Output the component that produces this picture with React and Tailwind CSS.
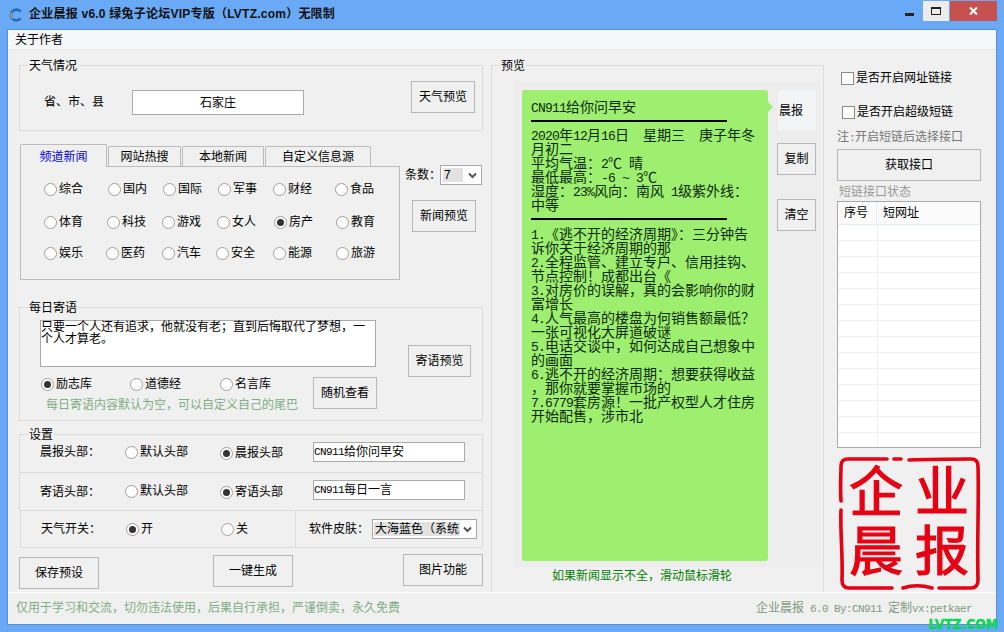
import React from 'react';

// ascii runs get a tightened mono font so they sit at half the width of a CJK glyph
const Mixed = ({ text, ascii }) => (
    <>
        {text.split(/([\x20-\x7e]+)/).map((part, i) =>
            /^[\x20-\x7e]+$/.test(part) ? (
                <span key={i} className={`font-['Liberation_Mono',monospace] ${ascii}`}>{part}</span>
            ) : (
                <span key={i}>{part}</span>
            )
        )}
    </>
);

const Btn = ({ children, className = '' }) => (
    <div className={`flex items-center justify-center shrink-0 border border-[#b8b8b8] bg-[#f0f0f0] ${className}`}>
        {children}
    </div>
);

const Radio = ({ label, checked, className = '' }) => (
    <div className={`flex items-center h-[16px] ${className}`}>
        <span className="flex items-center justify-center w-[13px] h-[13px] shrink-0 rounded-full border border-[#a0a0a0] bg-white">
            {checked && <span className="w-[7px] h-[7px] rounded-full bg-[#333]" />}
        </span>
        <span className="ml-[2px] whitespace-nowrap">{label}</span>
    </div>
);

const Check = ({ label, className = '' }) => (
    <div className={`flex items-center h-[16px] ${className}`}>
        <span className="w-[13px] h-[13px] shrink-0 border border-[#8a8a8a] bg-white" />
        <span className="ml-[2px] whitespace-nowrap">{label}</span>
    </div>
);

const Chevron = () => (
    <svg width="9" height="7" viewBox="0 0 9 7" className="shrink-0">
        <path d="M1 1.5 L4.5 5 L8 1.5" fill="none" stroke="#555" strokeWidth="2" />
    </svg>
);

const Group = ({ title, className = '', children }) => (
    <fieldset className={`border border-[#dcdcdc] ${className}`}>
        <legend className="ml-[8px] px-px h-[16px] leading-[18px]">{title}</legend>
        {children}
    </fieldset>
);

const newsRows = [
    { cols: 'grid-cols-[64px_55px_55px_55px_62px_1fr] mt-[14px]', items: ['综合', '国内', '国际', '军事', '财经', '食品'] },
    { cols: 'grid-cols-[63px_55px_55px_57px_62px_1fr] mt-[17px]', items: ['体育', '科技', '游戏', '女人', '房产', '教育'] },
    { cols: 'grid-cols-[62px_56px_54px_57px_63px_1fr] mt-[15px]', items: ['娱乐', '医药', '汽车', '安全', '能源', '旅游'] },
];

const weatherLines = [
    '2020年12月16日  星期三  庚子年冬',
    '月初二',
    '平均气温：2℃ 晴',
    '最低最高：-6 ~ 3℃',
    '湿度：23%风向：南风 1级紫外线：',
    '中等',
];

const newsLines = [
    '1.《逃不开的经济周期》：三分钟告',
    '诉你关于经济周期的那',
    '2.全程监管、建立专户、信用挂钩、',
    '节点控制！成都出台《',
    '3.对房价的误解，真的会影响你的财',
    '富增长',
    '4.人气最高的楼盘为何销售额最低？',
    '一张可视化大屏道破谜',
    '5.电话交谈中，如何达成自己想象中',
    '的画面',
    '6.逃不开的经济周期：想要获得收益',
    '，那你就要掌握市场的',
    '7.6779套房源！一批产权型人才住房',
    '开始配售，涉市北',
];

const PreviewLine = ({ text }) => (
    <div className="h-[14px] leading-[14px] whitespace-pre">
        <Mixed text={text} ascii="text-[13px] tracking-[-0.8px]" />
    </div>
);

const TitleBar = () => (
    <div className="flex items-start h-[29px] shrink-0 pr-[7px]">
        <svg width="14" height="14" viewBox="0 0 14 14" className="ml-[9px] mt-[8px] shrink-0">
            <path d="M11.6 3.6 A5.4 5.4 0 1 0 11.6 10.4" fill="none" stroke="#2270b8" strokeWidth="2.6" />
            <path d="M3 4.5 A4.2 4.2 0 0 0 4 10.5" fill="none" stroke="#d9a660" strokeWidth="1.2" />
        </svg>
        <div className="ml-[6px] mt-[6px] font-bold leading-[16px] tracking-[0.23px] whitespace-nowrap text-[#111]">
            企业晨报 v6.0 绿兔子论坛VIP专版（LVTZ.com）无限制
        </div>
        <div className="flex-1" />
        <div className="flex items-center justify-center w-[26px] h-[20px] mt-px">
            <span className="w-[9px] h-[3px] mt-[7px] bg-[#222]" />
        </div>
        <div className="flex items-center justify-center w-[26px] h-[20px] mt-px ml-px bg-[#ececec]">
            <span className="w-[10px] h-[8px] border border-t-2 border-[#222]" />
        </div>
        <div className="flex items-center justify-center w-[47px] h-[20px] mt-px ml-px bg-[#c75050]">
            <svg width="9" height="8" viewBox="0 0 9 8">
                <path d="M1 0.5 L8 7.5 M8 0.5 L1 7.5" stroke="#fff" strokeWidth="2" />
            </svg>
        </div>
    </div>
);

const LeftColumn = () => (
    <div className="w-[464px] pt-[7px] shrink-0">
        <Group title="天气情况" className="h-[74px]">
            <div className="flex items-start pl-[24px]">
                <div className="w-[60px] mt-[21px] whitespace-nowrap">省、市、县</div>
                <div className="flex items-center justify-center w-[172px] h-[25px] ml-[28px] mt-[17px] border border-[#aaa] bg-white">石家庄</div>
                <Btn className="w-[64px] h-[32px] ml-[107px] mt-[8px]">天气预览</Btn>
            </div>
        </Group>

        <div className="flex items-start mt-[13px] ml-px">
            <div className="w-[380px] shrink-0">
                <div className="flex items-end h-[22px] gap-px">
                    <div className="relative z-10 flex items-center justify-center w-[87px] h-[23px] -mb-px pt-px rounded-t-[2px] border border-b-0 border-[#bbb] bg-[#f0f0f0] text-[#0000e0]">频道新闻</div>
                    <div className="flex items-center justify-center w-[73px] h-[20px] pt-px rounded-t-[2px] border border-b-0 border-[#bbb]">网站热搜</div>
                    <div className="flex items-center justify-center w-[82px] h-[20px] pt-px rounded-t-[2px] border border-b-0 border-[#bbb]">本地新闻</div>
                    <div className="flex items-center justify-center w-[106px] h-[20px] pt-px rounded-t-[2px] border border-b-0 border-[#bbb]">自定义信息源</div>
                </div>
                <div className="h-[114px] pl-[23px] border border-[#bbb] flow-root">
                    {newsRows.map((row) => (
                        <div key={row.items[0]} className={`grid ${row.cols}`}>
                            {row.items.map((item) => (
                                <Radio key={item} label={item} checked={item === '房产'} />
                            ))}
                        </div>
                    ))}
                </div>
            </div>
            <div className="pt-[21px] ml-[5px]">
                <div className="flex items-center">
                    <span className="w-[35px] whitespace-nowrap">条数：</span>
                    <div className="flex items-center justify-between w-[42px] h-[20px] border border-[#a8a8a8] bg-white pl-[2px] pr-[4px]">
                        <span className="w-[20px] h-[14px] leading-[14px] bg-[#e2e2e2] pl-px">7</span>
                        <Chevron />
                    </div>
                </div>
                <Btn className="w-[64px] h-[32px] mt-[15px] ml-[7px]">新闻预览</Btn>
            </div>
        </div>

        <Group title="每日寄语" className="h-[122px] mt-[19px]">
            <div className="flex items-start pl-[20px]">
                <div className="w-[336px] shrink-0">
                    <div className="w-[336px] h-[47px] mt-[5px] border border-[#aaa] bg-white leading-[12px] whitespace-nowrap">
                        <div>只要一个人还有追求，他就没有老；直到后悔取代了梦想，一</div>
                        <div>个人才算老。</div>
                    </div>
                    <div className="flex items-start">
                        <div className="w-[273px] shrink-0">
                            <div className="grid grid-cols-[89px_90px_1fr] ml-px mt-[9px]">
                                <Radio label="励志库" checked />
                                <Radio label="道德经" />
                                <Radio label="名言库" />
                            </div>
                            <div className="ml-[6px] mt-[5px] text-[#7fae85] whitespace-nowrap">每日寄语内容默认为空，可以自定义自己的尾巴</div>
                        </div>
                        <Btn className="w-[64px] h-[32px] mt-[10px]">随机查看</Btn>
                    </div>
                </div>
                <Btn className="w-[63px] h-[32px] ml-[32px] mt-[30px]">寄语预览</Btn>
            </div>
        </Group>

        <Group title="设置" className="h-[85px] mt-[5px]">
            <div className="flex items-start h-[31px] pl-[20px] border-b border-[#dcdcdc]">
                <div className="w-[85px] mt-[2px]">晨报头部：</div>
                <Radio label="默认头部" className="w-[95px] mt-[2px]" />
                <Radio label="晨报头部" checked className="w-[93px] mt-[3px]" />
                <div className="flex items-center w-[152px] h-[20px] border border-[#aaa] bg-white whitespace-pre">
                    <Mixed text="CN911给你问早安" ascii="text-[11px] tracking-[-0.6px]" />
                </div>
            </div>
            <div className="flex items-start pt-[7px] pl-[20px]">
                <div className="w-[85px] mt-[4px]">寄语头部：</div>
                <Radio label="默认头部" className="w-[95px] mt-[3px]" />
                <Radio label="寄语头部" checked className="w-[93px] mt-[4px]" />
                <div className="flex items-center w-[152px] h-[20px] border border-[#aaa] bg-white whitespace-pre">
                    <Mixed text="CN911每日一言" ascii="text-[11px] tracking-[-0.6px]" />
                </div>
            </div>
        </Group>
        <div className="flex items-center h-[37px] w-[463px] ml-px border border-t-0 border-[#dcdcdc]">
            <div className="flex items-center w-[275px] h-full pl-[20px] border-r border-[#dcdcdc]">
                <div className="w-[85px]">天气开关：</div>
                <Radio label="开" checked className="w-[95px]" />
                <Radio label="关" />
            </div>
            <div className="flex items-center pl-[13px]">
                <div className="w-[63px] whitespace-nowrap">软件皮肤：</div>
                <div className="flex items-center justify-between w-[105px] h-[20px] border border-[#a8a8a8] bg-white pl-px pr-[4px]">
                    <span className="w-[86px] h-[14px] leading-[14px] overflow-hidden whitespace-nowrap bg-[#e2e2e2] pl-px">大海蓝色（系统</span>
                    <Chevron />
                </div>
            </div>
        </div>

        <div className="flex items-start">
            <Btn className="w-[80px] h-[32px] mt-[9px]">保存预设</Btn>
            <Btn className="w-[80px] h-[32px] mt-[7px] ml-[114px]">一键生成</Btn>
            <Btn className="w-[80px] h-[32px] mt-[6px] ml-[110px]">图片功能</Btn>
        </div>
    </div>
);

const Preview = () => (
    <div className="w-[333px] ml-[8px] pt-[7px] shrink-0">
        <Group title="预览" className="h-[535px] !border-b-0">
            <div className="flex items-start w-[306px] h-[485px] ml-[23px] mt-[9px] bg-[#ededed]">
                <div className="relative w-[246px] h-[471px] ml-[7px] mt-[8px] pl-[9px] pt-[10px] rounded-[3px] bg-[#9eee6f] text-[14px] text-[#0c2a0c] shrink-0">
                    <span className="absolute left-full top-[12px] w-0 h-0 border-y-[5px] border-l-[5px] border-y-transparent border-l-[#9eee6f]" />
                    <PreviewLine text="CN911给你问早安" />
                    <div className="w-[196px] h-[2px] mt-[6px] bg-black" />
                    <div className="mt-[6px]">
                        {weatherLines.map((line) => <PreviewLine key={line} text={line} />)}
                    </div>
                    <div className="w-[196px] h-[2px] mt-[6px] bg-black" />
                    <div className="mt-[7px]">
                        {newsLines.map((line) => <PreviewLine key={line} text={line} />)}
                    </div>
                </div>
                <div className="ml-[9px] mt-[8px] w-[39px]">
                    <div className="flex items-center w-[38px] h-[40px] ml-px pl-px pt-px bg-[#f3f4f6]">晨报</div>
                    <Btn className="w-[39px] h-[32px] mt-[13px]">复制</Btn>
                    <Btn className="w-[39px] h-[32px] mt-[24px]">清空</Btn>
                </div>
            </div>
            <div className="ml-[60px] mt-px text-[#008000] whitespace-nowrap">如果新闻显示不全，滑动鼠标滑轮</div>
        </Group>
    </div>
);

const Seal = () => (
    <div className="relative w-[143px] h-[134px] mt-[8px]">
        <svg width="143" height="134" viewBox="0 0 143 134" className="absolute inset-0">
            <g fill="none" stroke="#e60012" strokeWidth="3.6" strokeLinecap="round" strokeLinejoin="round">
                <path d="M4 45 C3 30 4 20 4 10 Q4 3 11 3 H50" />
                <path d="M57 3 H64" />
                <path d="M72 4 C95 3 115 3 134 3 Q141 3 141 10 C142 45 140 85 141 124 Q141 132 134 132 H102" />
                <path d="M95 132 C85 129 75 129 66 132" />
                <path d="M55 132 H12 Q5 132 5 124 C6 100 3 75 4 54" />
            </g>
        </svg>
        <div className="grid grid-cols-[66px_1fr] pt-[3px] pl-[12px] text-[54px] leading-[59px] text-[#e60012] [-webkit-text-stroke:1.2px_#e60012] font-['Noto_Sans_CJK_SC',sans-serif]">
            <span>企</span>
            <span>业</span>
            <span>晨</span>
            <span>报</span>
        </div>
    </div>
);

const RightColumn = () => (
    <div className="w-[144px] ml-[13px] shrink-0">
        <Check label="是否开启网址链接" className="mt-[20px] ml-[4px]" />
        <Check label="是否开启超级短链" className="mt-[18px] ml-[5px]" />
        <div className="mt-[9px] text-[#777] whitespace-pre">
            <Mixed text="注:开启短链后选择接口" ascii="text-[11px] tracking-[-0.6px]" />
        </div>
        <Btn className="w-[144px] h-[32px] mt-[3px]">获取接口</Btn>
        <div className="mt-[3px] ml-[2px] text-[#999]">短链接口状态</div>
        <div className="w-[144px] h-[247px] mt-px border border-[#aaa] bg-white overflow-hidden">
            <div className="flex h-[23px] border-b border-[#e4ecf8] bg-[#fbfbfb]">
                <div className="flex items-center w-[39px] pl-[6px] border-r border-[#e4ecf8]">序号</div>
                <div className="flex items-center pl-[6px]">短网址</div>
            </div>
            {Array.from({ length: 14 }, (_, i) => (
                <div key={i} className="flex h-[16px] border-b border-[#eeeeee]">
                    <div className="w-[40px] border-r border-[#eeeeee]" />
                </div>
            ))}
        </div>
        <Seal />
    </div>
);

export default function App() {
    return (
        <div className="relative flex flex-col w-[1004px] h-[632px] overflow-hidden bg-[#69a9f5] text-[12px] leading-[16px] text-black font-['Liberation_Sans','Noto_Sans_CJK_SC',sans-serif]">
            <TitleBar />
            <div className="flex flex-col w-[990px] h-[596px] ml-[7px] border border-[#5a90d2] bg-[#f0f0f0]">
                {/* Menu */}
                <div className="flex items-center h-[20px] pl-[7px] border-b border-[#e8e9ec] bg-[#f5f6f8] shrink-0">关于作者</div>

                {/* Main */}
                <div className="flex h-[542px] pl-[11px] shrink-0">
                    <LeftColumn />
                    <Preview />
                    <RightColumn />
                </div>

                {/* Footer */}
                <div className="flex items-center justify-between flex-1 pl-[8px] pr-[24px] pb-px border-t border-white">
                    <span className="text-[#7fae85]">仅用于学习和交流，切勿违法使用，后果自行承担，严谨倒卖，永久免费</span>
                    <span className="text-[#7f9a80] whitespace-pre">
                        <Mixed text="企业晨报 6.0 By:CN911 定制vx:petkaer" ascii="text-[11px] tracking-[-0.6px]" />
                    </span>
                </div>
            </div>
            <div className="absolute right-[6px] bottom-0 h-[15px] leading-[15px] text-[14px] font-bold text-[#0dd657] [-webkit-text-stroke:0.5px_#0dd657] font-['DejaVu_Sans',sans-serif] whitespace-nowrap scale-x-[0.88] origin-right">LVTZ.COM</div>
        </div>
    );
}
